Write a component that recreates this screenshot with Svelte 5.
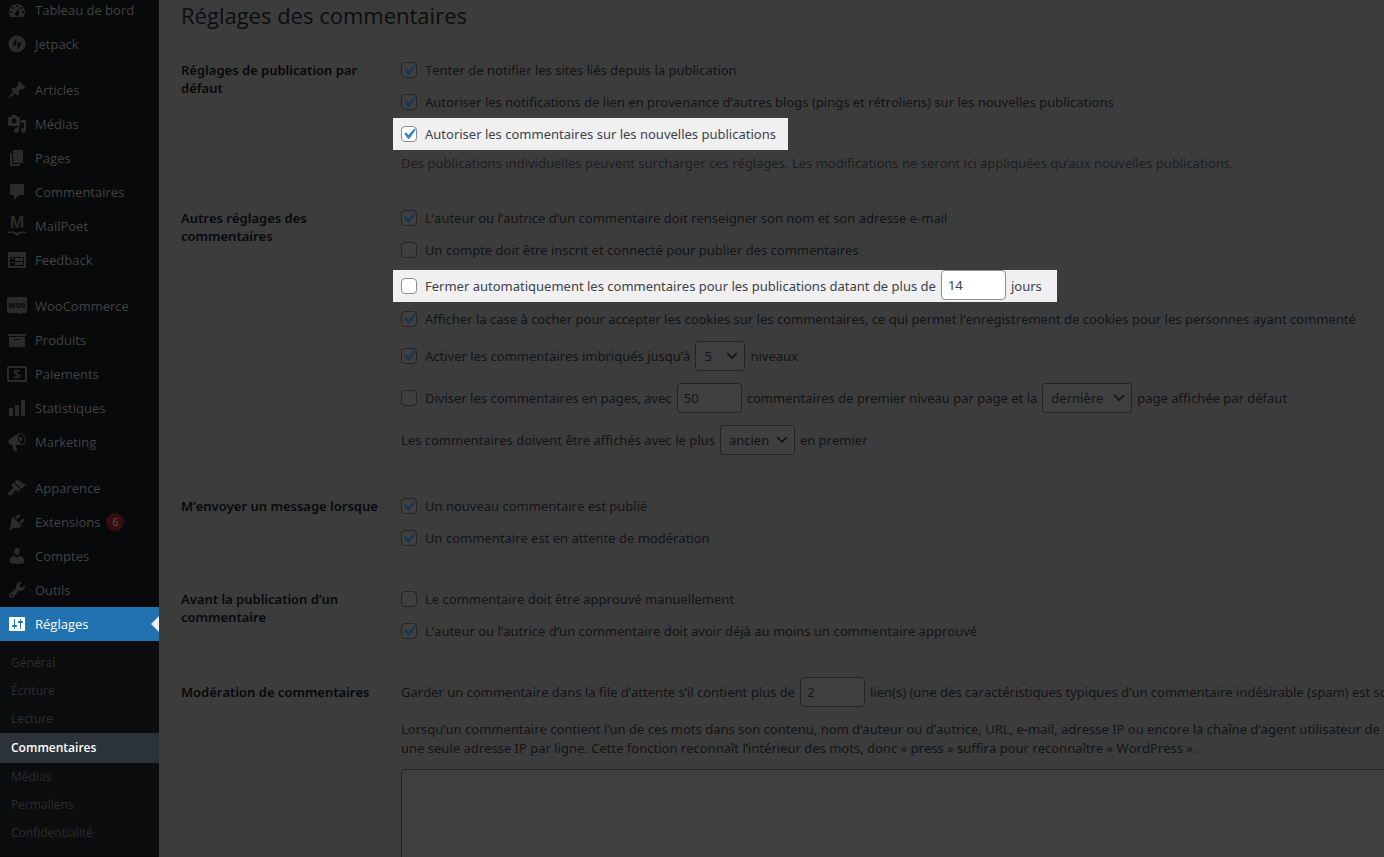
<script>
	// Dashicons-style glyphs, drawn on a 20x20 grid
	const icons = {
		dashboard:
			'M3.76 17h12.48c1.1-1.37 1.76-3.11 1.76-5 0-4.42-3.58-8-8-8s-8 3.58-8 8c0 1.89.66 3.63 1.76 5zM10 5c.55 0 1 .45 1 1s-.45 1-1 1-1-.45-1-1 .45-1 1-1zM6 7c.55 0 1 .45 1 1s-.45 1-1 1-1-.45-1-1 .45-1 1-1zm8 0c.55 0 1 .45 1 1s-.45 1-1 1-1-.45-1-1 .45-1 1-1zm-5.37 5.55L12 8v6c0 1.1-.9 2-2 2s-2-.9-2-2c0-.57.24-1.08.63-1.45zM4 11c.55 0 1 .45 1 1s-.45 1-1 1-1-.45-1-1 .45-1 1-1zm12 0c.55 0 1 .45 1 1s-.45 1-1 1-1-.45-1-1 .45-1 1-1z',
		jetpack: 'M10 1.5a8.5 8.5 0 1 0 0 17 8.5 8.5 0 0 0 0-17zM9.3 4v7.6H5.2zM10.7 16V8.4h4.1z',
		post: 'M10.44 3.02l1.82-1.82 6.36 6.35-1.83 1.82c-1.05-.68-2.48-.57-3.41.36l-.75.75c-.92.93-1.04 2.35-.35 3.41l-1.83 1.82-2.41-2.41-2.8 2.79c-.42.42-3.38 2.71-3.8 2.29s1.86-3.39 2.28-3.81l2.79-2.79L4.1 9.36l1.83-1.82c1.05.69 2.48.57 3.4-.36l.75-.75c.93-.92 1.05-2.35.36-3.41z',
		media: 'M13 11V4c0-.55-.45-1-1-1h-1.67L9 1H5L3.67 3H2c-.55 0-1 .45-1 1v7c0 .55.45 1 1 1h10c.55 0 1-.45 1-1zM7 4.5c1.38 0 2.5 1.12 2.5 2.5S8.38 9.5 7 9.5 4.5 8.38 4.5 7 5.62 4.5 7 4.5zM14 6h5v10.5c0 1.38-1.12 2.5-2.5 2.5S14 17.88 14 16.5s1.12-2.5 2.5-2.5c.17 0 .34.02.5.05V9h-3V6zm-4 8.05V13h2v3.5c0 1.38-1.12 2.5-2.5 2.5S7 17.88 7 16.5 8.12 14 9.5 14c.17 0 .34.02.5.05z',
		page: 'M6 15V2h10v13H6zm-1 1h8v2H3V5h2v11z',
		comments:
			'M4 2h12c.55 0 1 .45 1 1v9c0 .55-.45 1-1 1h-4l-5 5v-5H4c-.55 0-1-.45-1-1V3c0-.55.45-1 1-1z',
		mailpoet: 'M1 15.5h5.5c1.6 0 2.6 1.5 3.5 1.5s1.9-1.5 3.5-1.5H19v1.6h-5c-1.6 0-2.2 2.4-4 2.4s-2.4-2.4-4-2.4H1z',
		feedback:
			'M2 2h16c.55 0 1 .45 1 1v14c0 .55-.45 1-1 1H2c-.55 0-1-.45-1-1V3c0-.55.45-1 1-1zm15 14V7H3v9h14zM4 8v1h3V8H4zm4 0v3h8V8H8zm-4 4v1h3v-1H4zm4 0v3h8v-3H8z',
		woo: 'M2 1h16c1.1 0 2 .9 2 2v12c0 1.1-.9 2-2 2h-5l1 2-4-2H2c-1.1 0-2-.9-2-2V3c0-1.1.9-2 2-2z',
		archive: 'M19 4v2H1V4h18zM2 7h16v10H2V7zm11 3V9H7v1h6z',
		payments: 'M2 2h16c1.1 0 2 .9 2 2v12c0 1.1-.9 2-2 2H2c-1.1 0-2-.9-2-2V4c0-1.1.9-2 2-2zm0 2v12h16V4z',
		chart: 'M18 18V2h-4v16h4zm-6 0V7H8v11h4zm-6 0v-8H2v8h4z',
		megaphone:
			'M18.15 5.94c.46 1.62.38 3.22-.02 4.48-.42 1.28-1.26 2.18-2.3 2.48-.16.06-.26.06-.4.06-.06.02-.12.02-.18.02-.06.02-.14.02-.22.02h-6.8l2.22 5.5c.02.14-.06.26-.14.34-.08.1-.24.16-.34.16H6.95c-.1 0-.26-.06-.34-.16-.08-.08-.16-.2-.14-.34l-1-5.5H4.25l-.02-.02c-.5.06-1.08-.18-1.54-.62s-.88-1.08-1.06-1.88c-.24-.8-.2-1.56-.02-2.2.18-.62.58-1.08 1.06-1.3l.02-.02 9-5.4c.1-.06.18-.1.24-.16.06-.04.14-.08.24-.12.16-.08.28-.12.5-.18 1.04-.3 2.24.1 3.22.98s1.84 2.24 2.26 3.86zm-2.58 5.98h-.02c.4-.1.74-.34 1.04-.7.58-.7.86-1.76.86-3.04 0-.64-.1-1.3-.28-1.98-.34-1.36-1.02-2.5-1.78-3.24s-1.68-1.1-2.46-.88c-.82.22-1.4.96-1.7 2-.32 1.04-.28 2.36.06 3.72.38 1.36 1 2.5 1.8 3.24.78.74 1.62 1.1 2.48.88zm-2.54-7.08c.22-.04.42-.02.62.04.38.16.76.48 1.02 1s.42 1.2.42 1.78c0 .3-.04.56-.12.8-.18.48-.44.84-.86.94-.34.1-.8-.06-1.14-.4s-.64-.86-.78-1.5c-.18-.62-.12-1.24.02-1.72s.48-.84.82-.94z',
		appearance:
			'M14.48 11.06L7.41 3.99l1.5-1.5c.5-.56 2.3-.47 3.51.32 1.21.8 1.43 1.28 2.91 2.1 1.18.64 2.45 1.26 4.45.85zm-.71.71L6.7 4.7 4.93 6.47c-.39.39-.39 1.02 0 1.41l1.06 1.06c.39.39.39 1.03 0 1.42-.6.6-1.43 1.11-2.21 1.69-.35.26-.7.53-1.01.84C1.43 14.23.4 16.08 1.4 17.07c.99 1 2.84-.03 4.18-1.36.31-.31.58-.66.85-1.02.57-.78 1.08-1.61 1.69-2.21.39-.39 1.02-.39 1.41 0l1.06 1.06c.39.39 1.02.39 1.41 0z',
		plugins:
			'M13.11 4.36L9.87 7.6 8 5.73l3.24-3.24c.35-.34 1.05-.2 1.56.32.52.51.66 1.21.31 1.55zm-8 1.77l.91-1.12 9.01 9.01-1.19.84c-.71.71-2.63 1.16-3.82 1.16H6.14L4.9 17.26c-.59.59-1.54.59-2.12 0-.59-.58-.59-1.53 0-2.12l1.24-1.24v-3.88c0-1.13.4-3.19 1.09-3.89zm7.26 3.97l3.24-3.24c.34-.35 1.04-.21 1.55.31.52.51.66 1.21.31 1.55l-3.24 3.25z',
		users: 'M10 9.25c-2.27 0-2.73-3.44-2.73-3.44C7 4.02 7.82 2 9.97 2c2.16 0 2.98 2.02 2.71 3.81 0 0-.41 3.44-2.68 3.44zm0 2.57L12.72 10c2.39 0 4.52 2.33 4.52 4.53v2.49s-3.65 1.13-7.24 1.13c-3.65 0-7.24-1.13-7.24-1.13v-2.49c0-2.25 1.94-4.48 4.47-4.48z',
		tools: 'M16.68 9.77c-1.34 1.34-3.3 1.67-4.95.99l-5.41 6.52c-.99.99-2.59.99-3.58 0s-.99-2.59 0-3.57l6.52-5.42c-.68-1.65-.35-3.61.99-4.95 1.28-1.28 3.12-1.62 4.72-1.06l-2.89 2.89 2.82 2.82 2.86-2.87c.53 1.58.18 3.39-1.08 4.65zM3.81 16.21c.4.39 1.04.39 1.43 0 .4-.4.4-1.04 0-1.43-.39-.4-1.03-.4-1.43 0-.39.39-.39 1.03 0 1.43z',
		settings:
			'M18 16V4c0-.55-.45-1-1-1H3c-.55 0-1 .45-1 1v12c0 .55.45 1 1 1h14c.55 0 1-.45 1-1zM8 11h1c.55 0 1 .45 1 1s-.45 1-1 1H8v1.5c0 .28-.22.5-.5.5s-.5-.22-.5-.5V13H6c-.55 0-1-.45-1-1s.45-1 1-1h1V5.5c0-.28.22-.5.5-.5s.5.22.5.5V11zm5-2h-1c-.55 0-1-.45-1-1s.45-1 1-1h1V5.5c0-.28.22-.5.5-.5s.5.22.5.5V7h1c.55 0 1 .45 1 1s-.45 1-1 1h-1v5.5c0 .28-.22.5-.5.5s-.5-.22-.5-.5V9z'
	};

	const menu = [
		[
			{ label: 'Tableau de bord', icon: 'dashboard' },
			{ label: 'Jetpack', icon: 'jetpack' }
		],
		[
			{ label: 'Articles', icon: 'post' },
			{ label: 'Médias', icon: 'media' },
			{ label: 'Pages', icon: 'page' },
			{ label: 'Commentaires', icon: 'comments' },
			{ label: 'MailPoet', icon: 'mailpoet' },
			{ label: 'Feedback', icon: 'feedback' }
		],
		[
			{ label: 'WooCommerce', icon: 'woo' },
			{ label: 'Produits', icon: 'archive' },
			{ label: 'Paiements', icon: 'payments' },
			{ label: 'Statistiques', icon: 'chart' },
			{ label: 'Marketing', icon: 'megaphone' }
		],
		[
			{ label: 'Apparence', icon: 'appearance' },
			{ label: 'Extensions', icon: 'plugins', count: 6 },
			{ label: 'Comptes', icon: 'users' },
			{ label: 'Outils', icon: 'tools' },
			{ label: 'Réglages', icon: 'settings', current: true }
		]
	];

	const submenu = ['Général', 'Écriture', 'Lecture', 'Commentaires', 'Médias', 'Permaliens', 'Confidentialité'];
	const currentPage = 'Commentaires';

	let options = $state({
		pingback: true,
		pingStatus: true,
		commentStatus: true,
		requireNameEmail: true,
		registration: false,
		closeOld: false,
		closeDays: '14',
		cookies: true,
		thread: true,
		threadDepth: '5',
		paginate: false,
		perPage: '50',
		defaultPage: 'dernière',
		order: 'ancien',
		notifyComment: true,
		notifyModeration: true,
		moderation: false,
		previouslyApproved: true,
		maxLinks: '2',
		moderationKeys: ''
	});
</script>

{#snippet check(key, text)}
	<label class="check">
		<span class="box">
			<input type="checkbox" bind:checked={options[key]} />
			{#if options[key]}
				<svg class="tick" viewBox="0 0 20 20" aria-hidden="true">
					<path d="M14.83 4.89l1.34.94-5.81 8.38H9.02L5.78 9.67l1.34-1.25 2.57 2.4z" />
				</svg>
			{/if}
		</span>
		{text}
	</label>
{/snippet}

{#snippet dropdown(key, label, choices, size)}
	<span class="dropdown {size}">
		<select aria-label={label} bind:value={options[key]}>
			{#each choices as choice (choice)}
				<option value={choice}>{choice}</option>
			{/each}
		</select>
		<svg viewBox="0 0 20 20" aria-hidden="true"><path d="M5 6l5 5 5-5 2 1-7 7-7-7 2-1z" /></svg>
	</span>
{/snippet}

<div class="page">
	<nav class="sidebar" aria-label="Menu principal">
		{#each menu as group, i (i)}
			<ul class="group">
				{#each group as item (item.label)}
					<li>
						<a href="#{item.icon}" class="item" class:current={item.current}>
							<svg class="icon" viewBox="0 0 20 20" aria-hidden="true">
								<path fill-rule="evenodd" d={icons[item.icon]} />
								{#if item.icon === 'mailpoet'}
									<text class="letter" x="10" y="12" font-size="16">M</text>
								{:else if item.icon === 'woo'}
									<text class="letter cut" x="10" y="12" font-size="8">woo</text>
								{:else if item.icon === 'payments'}
									<text class="letter" x="10" y="15" font-size="13">$</text>
								{/if}
							</svg>
							{item.label}
							{#if item.count}<span class="count">{item.count}</span>{/if}
						</a>
					</li>
				{/each}
			</ul>
		{/each}
		<ul class="submenu">
			{#each submenu as name (name)}
				<li><a href="#{name}" class:current={name === currentPage}>{name}</a></li>
			{/each}
		</ul>
	</nav>

	<main>
		<h1>Réglages des commentaires</h1>

		<section>
			<h2>Réglages de publication par défaut</h2>
			<div class="fields">
				<div class="row">{@render check('pingback', 'Tenter de notifier les sites liés depuis la publication')}</div>
				<div class="row">
					{@render check('pingStatus', 'Autoriser les notifications de lien en provenance d’autres blogs (pings et rétroliens) sur les nouvelles publications')}
				</div>
				<div class="row lit">
					{@render check('commentStatus', 'Autoriser les commentaires sur les nouvelles publications')}
				</div>
				<p class="description">
					Des publications individuelles peuvent surcharger ces réglages. Les modifications ne seront ici appliquées qu’aux nouvelles publications.
				</p>
			</div>
		</section>

		<section>
			<h2>Autres réglages des commentaires</h2>
			<div class="fields">
				<div class="row">
					{@render check('requireNameEmail', 'L’auteur ou l’autrice d’un commentaire doit renseigner son nom et son adresse e-mail')}
				</div>
				<div class="row">
					{@render check('registration', 'Un compte doit être inscrit et connecté pour publier des commentaires')}
				</div>
				<div class="row lit spaced">
					{@render check('closeOld', 'Fermer automatiquement les commentaires pour les publications datant de plus de')}
					<input class="number" type="text" inputmode="numeric" aria-label="Nombre de jours" bind:value={options.closeDays} />
					<span>jours</span>
				</div>
				<div class="row">
					{@render check('cookies', 'Afficher la case à cocher pour accepter les cookies sur les commentaires, ce qui permet l’enregistrement de cookies pour les personnes ayant commenté')}
				</div>
				<div class="row tall">
					{@render check('thread', 'Activer les commentaires imbriqués jusqu’à')}
					{@render dropdown('threadDepth', 'Niveaux', ['2', '3', '4', '5', '6', '7', '8', '9', '10'], 'small')}
					<span>niveaux</span>
				</div>
				<div class="row tall">
					{@render check('paginate', 'Diviser les commentaires en pages, avec')}
					<input class="number" type="text" inputmode="numeric" aria-label="Commentaires par page" bind:value={options.perPage} />
					<span>commentaires de premier niveau par page et la</span>
					{@render dropdown('defaultPage', 'Page par défaut', ['dernière', 'première'], 'large')}
					<span>page affichée par défaut</span>
				</div>
				<div class="row tall">
					<span>Les commentaires doivent être affichés avec le plus</span>
					{@render dropdown('order', 'Ordre', ['ancien', 'récent'], 'medium')}
					<span>en premier</span>
				</div>
			</div>
		</section>

		<section>
			<h2>M’envoyer un message lorsque</h2>
			<div class="fields">
				<div class="row">{@render check('notifyComment', 'Un nouveau commentaire est publié')}</div>
				<div class="row">{@render check('notifyModeration', 'Un commentaire est en attente de modération')}</div>
			</div>
		</section>

		<section>
			<h2>Avant la publication d’un commentaire</h2>
			<div class="fields">
				<div class="row">{@render check('moderation', 'Le commentaire doit être approuvé manuellement')}</div>
				<div class="row">
					{@render check('previouslyApproved', 'L’auteur ou l’autrice d’un commentaire doit avoir déjà au moins un commentaire approuvé')}
				</div>
			</div>
		</section>

		<section>
			<h2>Modération de commentaires</h2>
			<div class="fields">
				<div class="row">
					<label for="max-links">Garder un commentaire dans la file d’attente s’il contient plus de</label>
					<input id="max-links" class="number" type="text" inputmode="numeric" bind:value={options.maxLinks} />
					<span>lien(s) (une des caractéristiques typiques d’un commentaire indésirable (spam) est son</span>
				</div>
				<label class="help" for="moderation-keys">
					Lorsqu’un commentaire contient l’un de ces mots dans son contenu, nom d’auteur ou d’autrice, URL, e-mail, adresse IP ou encore la chaîne d’agent utilisateur de<br />
					une seule adresse IP par ligne. Cette fonction reconnaît l’intérieur des mots, donc «&nbsp;press&nbsp;» suffira pour reconnaître «&nbsp;WordPress&nbsp;».
				</label>
				<textarea id="moderation-keys" rows="10" bind:value={options.moderationKeys}></textarea>
			</div>
		</section>
	</main>
</div>

<style>
	:global(body) {
		margin: 0;
		overflow: hidden;
		background: #3c3c3c;
	}

	.page {
		--text: #131416;
		--border: #232425;
		--field: #3f3f3f;
		--tick: #183650;
		display: flex;
		height: 100vh;
		overflow: hidden;
		color: var(--text);
		background: #3c3c3c;
		font: 13px/18px 'Open Sans', 'Noto Sans', sans-serif;
	}

	ul {
		margin: 0;
		padding: 0;
		list-style: none;
	}

	/* Sidebar */
	.sidebar {
		flex: 0 0 159px;
		margin-top: -7px;
		background: #07090a;
	}

	.group + .group {
		margin-top: 12px;
	}

	.item {
		position: relative;
		display: flex;
		align-items: center;
		gap: 8px;
		height: 34px;
		padding-left: 7px;
		color: #424344;
		text-decoration: none;
	}

	.icon {
		width: 20px;
		height: 20px;
		fill: #2a2b2c;
	}

	.letter {
		font-family: 'Open Sans', sans-serif;
		font-weight: 700;
		text-anchor: middle;
	}

	.cut {
		fill: #07090a;
	}

	.item.current {
		color: #fff;
		background: #2271b1;
	}

	.item.current .icon {
		fill: #fff;
	}

	.item.current::after {
		content: '';
		position: absolute;
		right: 0;
		border: 8px solid transparent;
		border-left-width: 0;
		border-right-color: #f0f0f1;
	}

	.count {
		width: 18px;
		margin-left: -2px;
		border-radius: 9px;
		color: #555;
		background: #360e0f;
		font-size: 11px;
		text-align: center;
	}

	.submenu {
		padding: 8px 0 9px;
		background: #0b0d0e;
	}

	.submenu a {
		display: block;
		padding-left: 11px;
		color: #2c2e30;
		font-size: 12px;
		line-height: 28px;
		text-decoration: none;
	}

	.submenu a.current {
		color: #fff;
		background: #2c3338;
		font-weight: 600;
		line-height: 30px;
	}

	/* Settings form */
	main {
		flex: 1;
		min-width: 0;
		padding-left: 22px;
		overflow: hidden;
		font-family: 'Noto Sans', 'Open Sans', sans-serif;
		font-kerning: none;
		white-space: nowrap;
	}

	h1 {
		margin: 0 0 24px;
		color: #0d0e0f;
		font-family: 'Open Sans', sans-serif;
		font-size: 22px;
		font-weight: 400;
		line-height: 30px;
	}

	section {
		display: grid;
		grid-template-columns: 200px 1fr;
		gap: 20px;
		margin-bottom: 29px;
	}

	h2 {
		margin: 0;
		padding-top: 7px;
		color: #07090a;
		font-size: 13px;
		font-weight: 600;
		line-height: 18px;
		white-space: normal;
	}

	.fields {
		min-width: 0;
	}

	.row {
		display: flex;
		align-items: center;
		gap: 5px;
		height: 32px;
	}

	.row.tall {
		height: 42px;
	}

	.row.lit {
		--text: #3c434a;
		--border: #8c8f94;
		--field: #fff;
		--tick: #3582c4;
		width: fit-content;
		margin-left: -8px;
		padding: 0 12px 0 8px;
		color: var(--text);
		background: #f0f0f1;
	}

	.row.spaced {
		margin-top: 4px;
		margin-bottom: 1px;
		padding-right: 15px;
	}

	.row.spaced .number {
		align-self: flex-start;
	}

	.check {
		display: flex;
		align-items: center;
		gap: 8px;
	}

	.box {
		position: relative;
		width: 16px;
		height: 16px;
	}

	.box input {
		display: block;
		box-sizing: border-box;
		width: 16px;
		height: 16px;
		margin: 0;
		border: 1px solid var(--border);
		border-radius: 4px;
		appearance: none;
		background: var(--field);
	}

	.tick {
		position: absolute;
		inset: -3px;
		width: 22px;
		height: 22px;
		fill: var(--tick);
		pointer-events: none;
	}

	.number,
	select,
	textarea {
		box-sizing: border-box;
		border: 1px solid var(--border);
		border-radius: 4px;
		color: var(--text);
		background: var(--field);
		font: inherit;
	}

	.number {
		width: 65px;
		height: 30px;
		padding: 0 6px;
	}

	.dropdown {
		position: relative;
		width: 50px;
		height: 30px;
	}

	.dropdown.medium {
		width: 75px;
	}

	.dropdown.large {
		width: 90px;
	}

	select {
		width: 100%;
		height: 30px;
		padding: 0 20px 0 8px;
		border-radius: 3px;
		appearance: none;
	}

	.dropdown svg {
		position: absolute;
		top: 7px;
		right: 5px;
		width: 16px;
		height: 16px;
		fill: var(--text);
		pointer-events: none;
	}

	.description {
		margin: 0;
		padding-top: 4px;
		color: #1d1e20;
		line-height: 19px;
	}

	.help {
		display: block;
		margin: 12px 0 11px;
		line-height: 19px;
	}

	textarea {
		display: block;
		width: calc(100% + 8px);
		resize: none;
	}
</style>
